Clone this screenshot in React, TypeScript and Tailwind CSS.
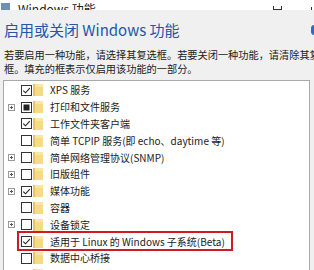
import React from 'react';

type Row = {
  label: string;
  state: 'on' | 'off' | 'part';
  expand?: boolean;
  marked?: boolean;
};

const rows: Row[] = [
  { label: 'XPS 服务', state: 'on' },
  { label: '打印和文件服务', state: 'part', expand: true },
  { label: '工作文件夹客户端', state: 'on' },
  { label: '简单 TCPIP 服务(即 echo、daytime 等)', state: 'off' },
  { label: '简单网络管理协议(SNMP)', state: 'off', expand: true },
  { label: '旧版组件', state: 'off', expand: true },
  { label: '媒体功能', state: 'on', expand: true },
  { label: '容器', state: 'off' },
  { label: '设备锁定', state: 'off', expand: true },
  { label: '适用于 Linux 的 Windows 子系统(Beta)', state: 'on', marked: true },
  { label: '数据中心桥接', state: 'off' },
  { label: '远程差分压缩 API 支持', state: 'off', expand: true },
];

function Expander() {
  return (
    <svg width="7" height="7" viewBox="0 0 7 7" className="block">
      <rect x="0.5" y="0.5" width="6" height="6" fill="#fff" stroke="#9a9a9a" />
      <path d="M2 3.5h3M3.5 2v3" stroke="#555" strokeWidth="1" />
    </svg>
  );
}

function Check({ state }: { state: Row['state'] }) {
  return (
    <svg width="11" height="11" viewBox="0 0 11 11" className="block">
      <rect x="0.5" y="0.5" width="10" height="10" fill="#fff" stroke="#333" />
      {state === 'on' && (
        <path d="M2.3 5.6l2.2 2.2 4.3-4.6" fill="none" stroke="#222" strokeWidth="1.1" />
      )}
      {state === 'part' && <rect x="2.5" y="2.5" width="6" height="6" fill="#222" />}
    </svg>
  );
}

function Folder() {
  return (
    <svg width="10" height="12" viewBox="0 0 10 12" className="block">
      <rect x="0" y="0" width="10" height="12" fill="#f7d98a" />
      <rect x="0" y="0" width="2" height="12" fill="#e9c462" />
      <rect x="2" y="0" width="8" height="3" fill="#fbe5a6" />
    </svg>
  );
}

export default function App() {
  return (
    <div
      className="w-[314px] h-[270px] overflow-hidden bg-[#f0f0f0] text-[#1b1b1b]"
      style={{ fontFamily: '"Noto Sans CJK SC", "Noto Sans", sans-serif' }}
    >
      {/* cut-off title bar */}
      <div className="h-[10px] bg-white overflow-hidden relative flex items-end">
        <div className="flex items-end gap-[8px] pl-[1px] -mb-[6px]">
          <div className="w-[9px] h-[9px] bg-[#6f8fb8] mb-[4px]" />
          <span className="text-[12px] leading-[14px] text-[#222]">Windows 功能</span>
        </div>
        <div className="ml-auto flex items-end gap-[24px] pr-[2px]">
          <div className="w-[9px] h-[4px] border-x border-b border-[#333]" />
          <div className="w-[6px] h-[3px] border-r border-[#333]" />
        </div>
      </div>

      {/* heading */}
      <div className="flex items-center pl-[4px] pt-[11px] h-[28px]">
        <h1 className="text-[15px] leading-[17px] text-[#2257a8] whitespace-nowrap">
          启用或关闭 Windows 功能
        </h1>
        <div className="ml-auto -mr-[4px] w-[7px] h-[10px] rounded-full bg-[#2d6bc9]" />
      </div>

      {/* description */}
      <div className="pl-[4px] pt-[10px] text-[10.2px] leading-[14px] whitespace-nowrap overflow-hidden text-[#222]">
        <p>若要启用一种功能，请选择其复选框。若要关闭一种功能，请清除其复选框。</p>
        <p>框。填充的框表示仅启用该功能的一部分。</p>
      </div>

      {/* feature tree */}
      <div className="mt-[4px] ml-[3px] mr-[4px] h-[200px] bg-white border border-[#a9a9a9] pt-[1px]">
        {rows.map((r) => (
          <div key={r.label} className="relative flex items-center h-[16.8px]">
            <div className="w-[17px] pl-[4px] flex items-center">{r.expand && <Expander />}</div>
            <Check state={r.state} />
            <div className="ml-[1px]">
              <Folder />
            </div>
            <span className="ml-[7px] text-[10px] leading-[12px] whitespace-nowrap">{r.label}</span>
            {r.marked && (
              <div className="absolute left-[13px] -top-[2px] w-[216px] h-[20px] border-2 border-[#d21a24]" />
            )}
          </div>
        ))}
      </div>
    </div>
  );
}
